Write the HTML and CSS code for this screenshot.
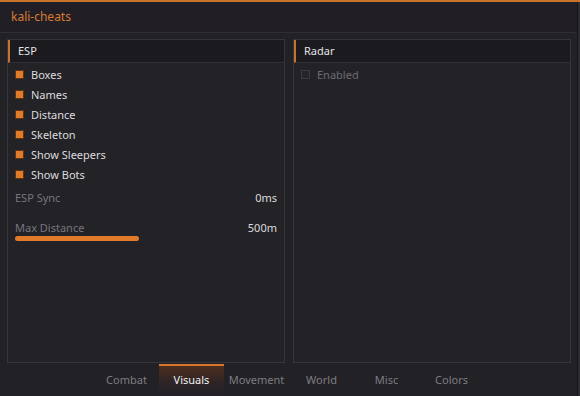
FILE: index.html
```html
<!DOCTYPE html>
<html>
<head>
<meta charset="utf-8">
<link rel="stylesheet" href="styles.css">
</head>
<body>
<div class="window">
  <div class="titlebar">kali-cheats</div>
  <div class="content">
    <section class="panel">
      <div class="panel-head">ESP</div>
      <div class="panel-body">
        <div class="check on"><span class="box"></span>Boxes</div>
        <div class="check on"><span class="box"></span>Names</div>
        <div class="check on"><span class="box"></span>Distance</div>
        <div class="check on"><span class="box"></span>Skeleton</div>
        <div class="check on"><span class="box"></span>Show Sleepers</div>
        <div class="check on"><span class="box"></span>Show Bots</div>
        <div class="slider first"><span class="lbl">ESP Sync</span><span class="val">0ms</span></div>
        <div class="slider"><span class="lbl">Max Distance</span><span class="val">500m</span></div>
        <div class="track"><div class="fill" style="width:124px"></div></div>
      </div>
    </section>
    <section class="panel">
      <div class="panel-head">Radar</div>
      <div class="panel-body">
        <div class="check off"><span class="box"></span>Enabled</div>
      </div>
    </section>
  </div>
  <nav class="tabs">
    <div class="tab">Combat</div>
    <div class="tab active">Visuals</div>
    <div class="tab">Movement</div>
    <div class="tab">World</div>
    <div class="tab">Misc</div>
    <div class="tab">Colors</div>
  </nav>
  <div class="edge"></div>
</div>
</body>
</html>
```
FILE: styles.css
```css
* { box-sizing: border-box; }
html, body { margin: 0; padding: 0; }
body {
  width: 580px;
  height: 396px;
  overflow: hidden;
  background: #222126;
  font-family: "Noto Sans", "Open Sans", sans-serif;
  font-size: 11px;
  color: #dcdcde;
}
.window {
  position: relative;
  width: 580px;
  height: 396px;
  border-top: 2px solid #c8722c;
  display: flex;
  flex-direction: column;
  background: #222126;
}
.titlebar {
  height: 31px;
  line-height: 30px;
  padding-left: 11px;
  font-size: 12px;
  color: #d87a30;
  background: #211f25;
  border-bottom: 1px solid #2f2e34;
}
.content {
  height: 331px;
  padding: 6px 9px 1px 7px;
  display: grid;
  grid-template-columns: 278px 278px;
  column-gap: 8px;
}
.panel {
  border: 1px solid #36353b;
  background: #232227;
  display: flex;
  flex-direction: column;
}
.panel-head {
  height: 23px;
  line-height: 22px;
  padding-left: 8px;
  background: #1b1a1f;
  border-left: 2px solid #c8722c;
  border-bottom: 1px solid #303036;
  color: #e4e4e6;
}
.panel-body {
  padding: 1px 7px 0 7px;
}
.check {
  height: 20px;
  display: flex;
  align-items: center;
  color: #dcdcde;
}
.check .box {
  width: 9px;
  height: 9px;
  margin: 0 7px 0 0;
}
.check.on .box {
  background: #e07b2a;
  border: 1px solid #5a3318;
}
.check.off { color: #6d6c72; }
.check.off .box {
  border: 1px solid #3a393f;
  background: #252429;
}
.slider {
  height: 20px;
  display: flex;
  align-items: center;
  justify-content: space-between;
}
.slider.first { margin-top: 3px; margin-bottom: 10px; }
.slider .lbl { color: #77767c; }
.slider .val { color: #dcdcde; }
.track {
  height: 5px;
  margin-top: -1px;
}
.fill {
  height: 5px;
  border-radius: 3px;
  background: #e07b2a;
}
.tabs {
  flex: 1;
  display: flex;
  padding-left: 94px;
}
.tab {
  width: 65px;
  text-align: center;
  line-height: 27px;
  color: #7e7d83;
  border-top: 2px solid transparent;
}
.tab.active {
  color: #f2f2f2;
  border-top: 2px solid #d8782c;
  background: linear-gradient(#4c2e1e, #2b2326 60%, #222126);
}
.edge {
  position: absolute;
  top: 0;
  right: 0;
  width: 3px;
  height: 396px;
  border-left: 1px solid #151418;
  background: #2c2b30;
}
```
